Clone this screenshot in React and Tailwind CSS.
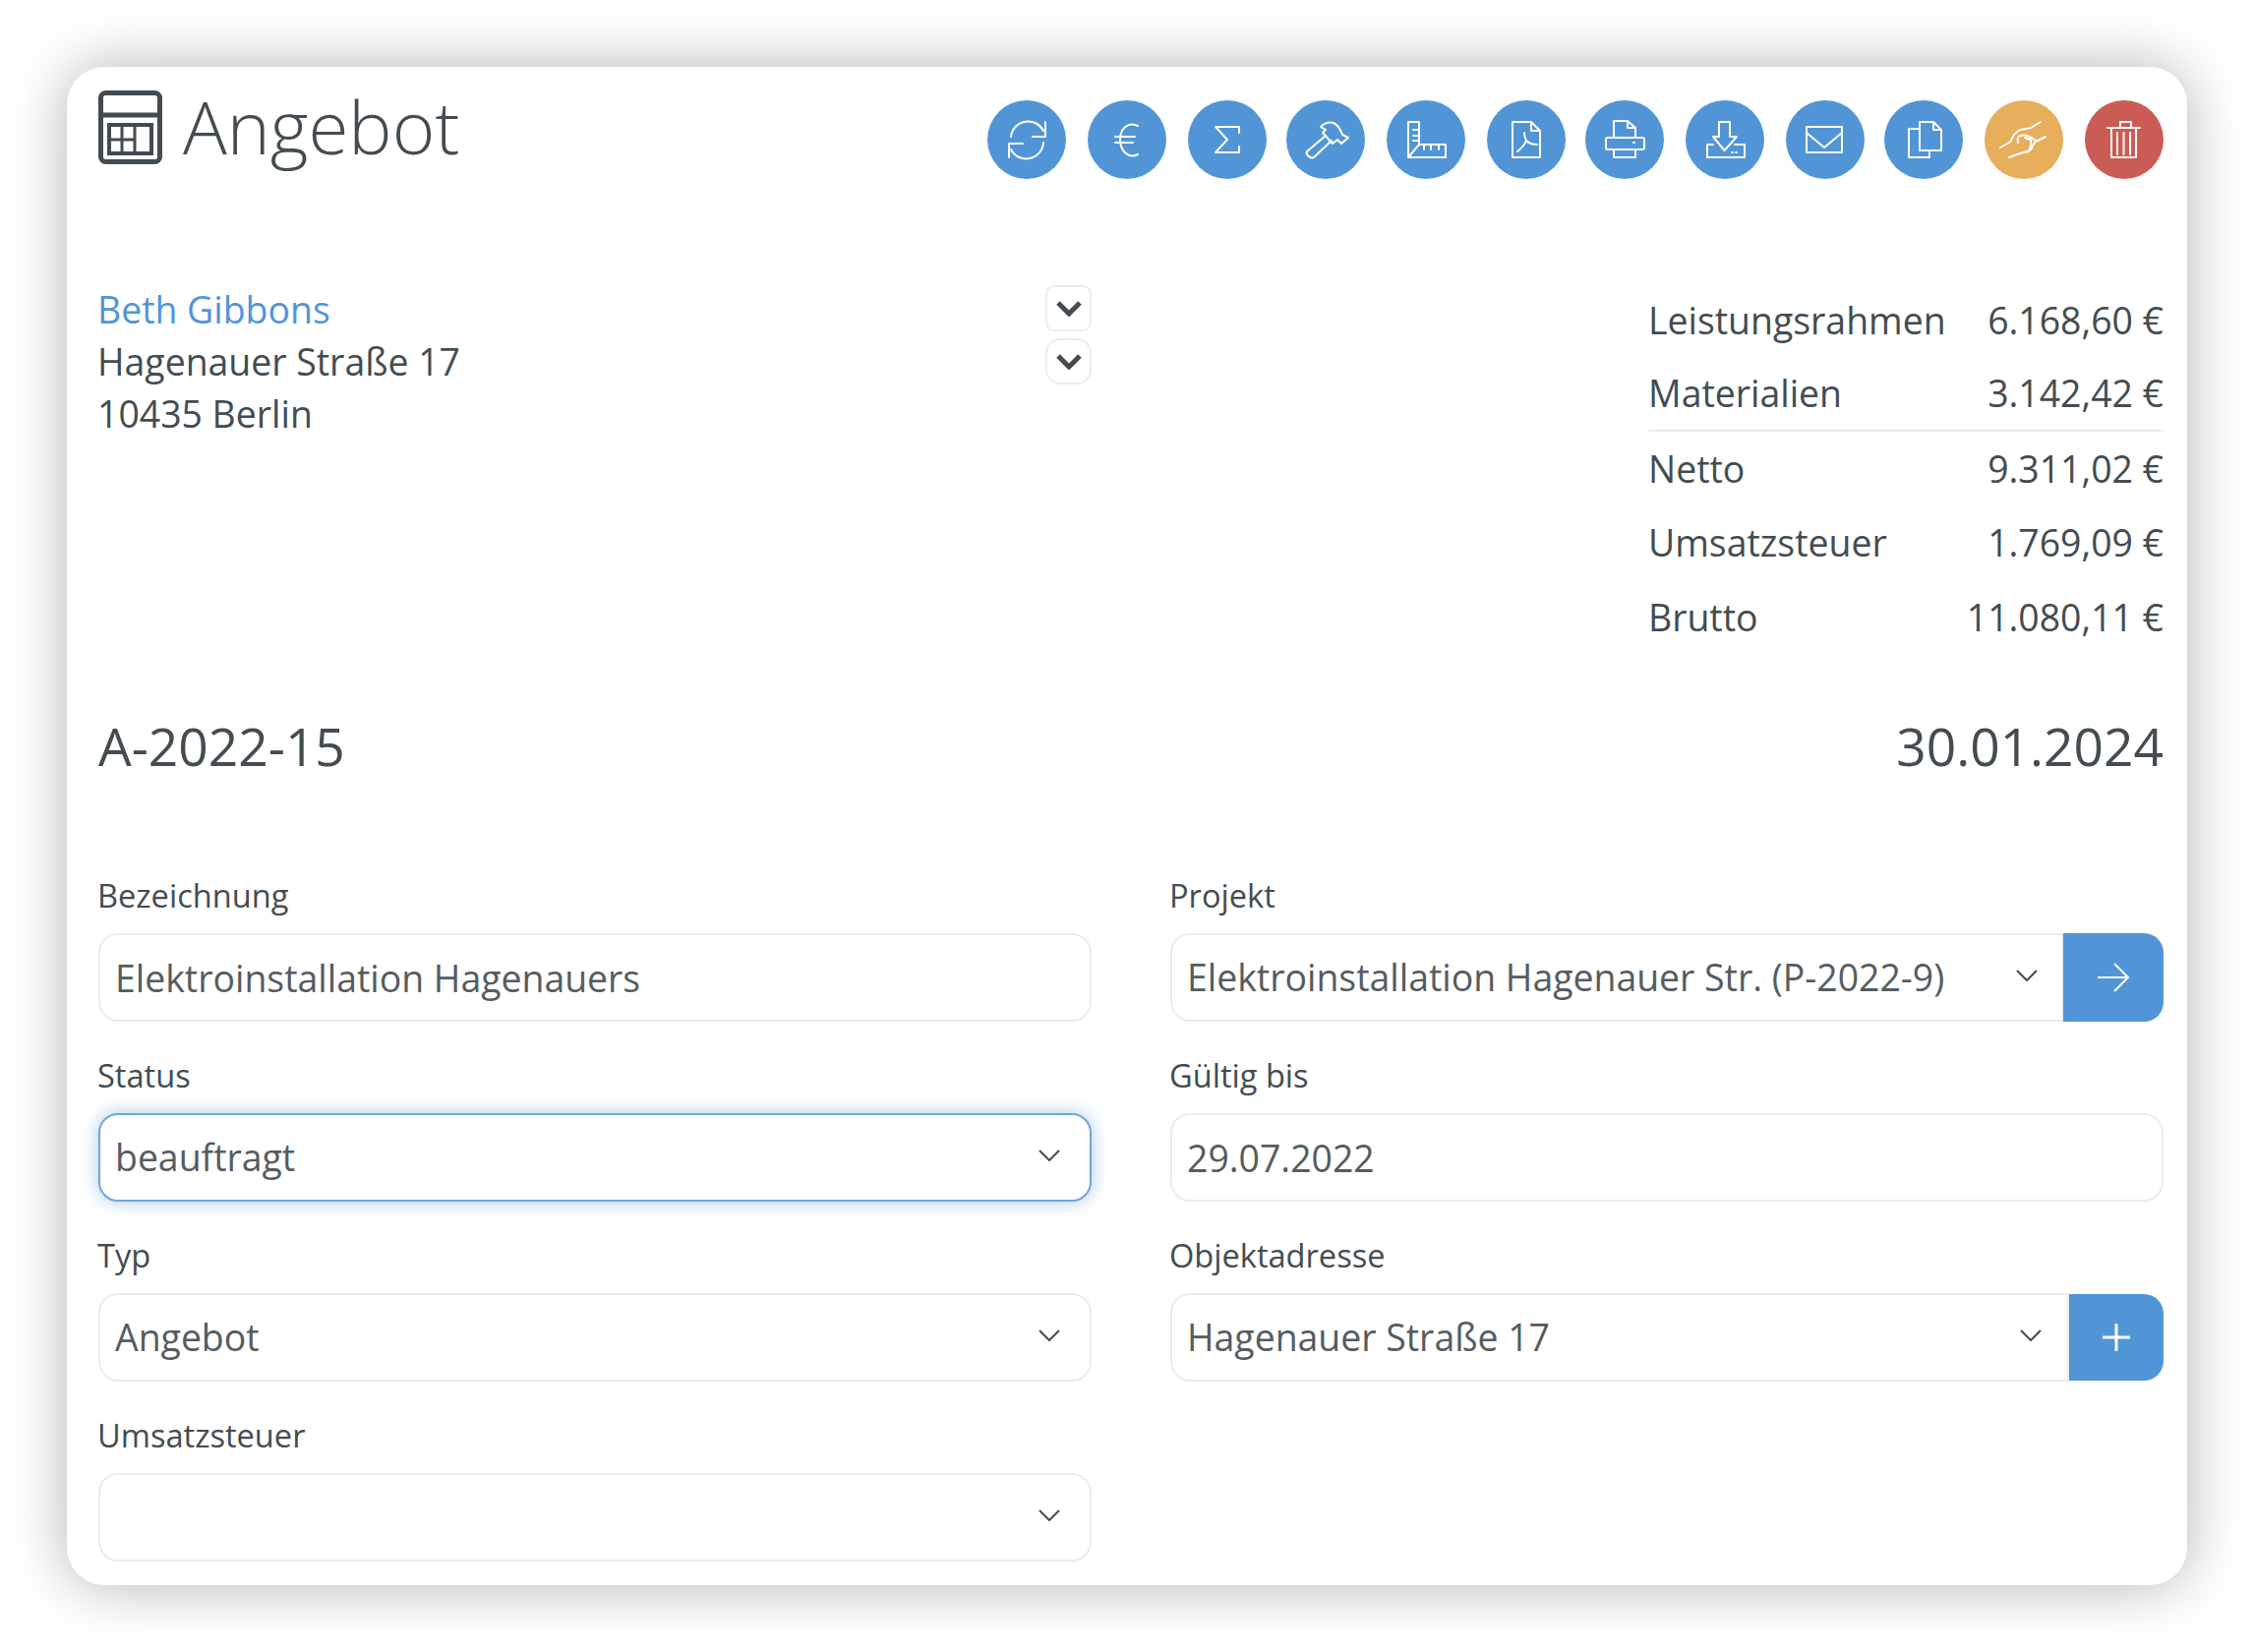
const S = ({ children }) => (
  <svg viewBox="0 0 80 80" className="w-[80px] h-[80px]" fill="none" stroke="white" strokeWidth="2" strokeLinejoin="round" strokeLinecap="round">
    {children}
  </svg>
);

const icons = [
  <S key="a"><path d="M24 37A17.500 17.500 0 0 1 57 31" /><path d="M57 43A17.500 17.500 0 0 1 24 50" /><path d="M59 22v15H46" /><path d="M22 58V44h14" /></S>,
  <S key="b"><path d="M51 26C41 21 33 29 33 40s8 20 18 15" /><path d="M28 37h20M28 43h18" /></S>,
  <S key="c"><path d="M52 33v-6H28l12 13-12 13h24v-6" /></S>,
  <S key="d"><path d="M35 27c4-4 9-5 13-4 4 2 7 6 9 12l6 3-7 6-4-4-5 4-10-11 3-3z" /><path d="M40 36 21 52c-2 3 4 8 7 6l18-17" /></S>,
  <S key="e"><path d="M22 22h11v23h27v13H22z" /><path d="M22 58 33 45" /><path d="M27 30h6M27 36h6M27 41h6M38 45v5M45 45v5M53 45v5" /></S>,
  <S key="f"><path d="M26 22h19l9 9v27H26z" /><path d="M45 22v9h9" /><path d="M38 33c0 4 1 6 2 8 3 3 7 4 11 4M40 41c-2 5-5 8-9 11" /></S>,
  <S key="g"><path d="M29 38V21h14l8 7v10" /><path d="M43 21v7h8" /><rect x="21" y="38" width="39" height="12" rx="2" /><path d="M29 50v8h22v-8" /><path d="M49 43h1" /></S>,
  <S key="h"><path d="M34 22h11v15h7L39.500 51 28 37h6z" /><path d="M28 45h-6v13h38V45H50" /><path d="M47 53h1M51 53h1" /></S>,
  <S key="i"><path d="M21 27h36v26H21z" /><path d="M21 33l18 15 18-15" /></S>,
  <S key="j"><path d="M36 22h14l8 8v21H36z" /><path d="M50 22v8h8" /><path d="M36 29H25v29h21v-7" /></S>,
  <S key="k"><path d="M16 48l9-5c3-2 3-6 5-8 3-3 5-5 7-5 4-1 7-1 10-2l10-6" /><path d="M62 37l-10 5c-3 2-3 6-5 8-2 2-5 3-8 3l-14 5" /><path d="M34 43c-1-4 0-7 3-7 5-2 10 1 15 5" /><path d="M41 38l6 2c1 3 0 6-1 9" /></S>,
  <S key="l"><path d="M23 28h33M36 28v-6h11v6M27 28v30h25V28" /><path d="M33 33v22M39.500 33v22M46 33v22" /></S>,
];

const buttonClasses = [
  "bg-[#5195d7]", "bg-[#5195d7]", "bg-[#5195d7]", "bg-[#5195d7] -ml-[2px]", "bg-[#5195d7]", "bg-[#5195d7]",
  "bg-[#5195d7] -ml-[2px]", "bg-[#5195d7]", "bg-[#5195d7]", "bg-[#5195d7] -ml-[2px]", "bg-[#e7ae5b]", "bg-[#cb5c55]",
];

const Chevron = ({ className }) => (
  <svg viewBox="0 0 22 12" className={className} fill="none" stroke="#444b50" strokeWidth="2">
    <path d="M1 1l10 10L21 1" />
  </svg>
);

const Field = ({ label, children }) => (
  <div className="flex flex-col">
    <label className="h-[58px] -ml-[1px] leading-[39px] text-[32.600px]">{label}</label>
    {children}
  </div>
);

const Select = ({ value, focus, className = "rounded-[20px]", arrow = "right-[32px]" }) => (
  <div className={`relative w-full min-w-0 h-[90px] ${className}`}>
    <select
      defaultValue={value}
      className={`w-full h-full appearance-none bg-white pl-[15px] text-[37.400px] text-[#555c60] outline-none ${className} ${
        focus ? "border-2 border-[#6fa5de] shadow-[0_0_18px_rgba(81,149,215,0.5)]" : "border-2 border-[#ececec]"
      }`}
    >
      <option value={value}>{value}</option>
    </select>
    <Chevron className={`absolute ${arrow} top-[37px] w-[22px] h-[12px] pointer-events-none`} />
  </div>
);

const Input = ({ value }) => (
  <input
    readOnly
    value={value}
    className="w-full h-[90px] rounded-[20px] border-2 border-[#ececec] bg-white pl-[15px] text-[37.400px] text-[#555c60] outline-none"
  />
);

const Row = ({ label, value, className = "" }) => (
  <div className={`flex justify-between items-center h-[75.500px] ${className}`}>
    <span>{label}</span>
    <span>{value}</span>
  </div>
);

export default function App() {
  return (
    <div className="w-[2292px] h-[1680px] bg-white pt-[68px] pl-[68px] font-['Open_Sans',sans-serif] text-[#434c50]">
      <div className="w-[2156px] h-[1544px] bg-white rounded-[38px] shadow-[0_0_60px_rgba(0,0,0,0.3)] pl-[32px] pr-[24px] pt-[24px]">
        <header className="flex justify-between h-[120px]">
          <div className="flex items-start">
            <svg viewBox="0 0 65 75" className="w-[65px] h-[75px]" fill="none" stroke="#434b52" strokeWidth="5">
              <rect x="2.500" y="2.500" width="60" height="70" rx="5" />
              <path d="M2.500 25h60" />
              <rect x="11" y="35" width="43" height="29" strokeWidth="4" />
              <path d="M24 35v29M37 35v29M11 50h26" strokeWidth="3" />
            </svg>
            <h1 className="ml-[21px] -mt-[2px] text-[74.500px] leading-[76px] font-light">Angebot</h1>
          </div>
          <div className="flex gap-[22px] pt-[10px]">
            {icons.map((icon, i) => (
              <button key={i} className={`w-[80px] h-[80px] rounded-full flex items-center justify-center ${buttonClasses[i]}`}>
                {icon}
              </button>
            ))}
          </div>
        </header>

        <section className="flex justify-between pt-[74px] h-[510px] text-[37.400px]">
          <div className="w-[1010px] flex justify-between">
            <div className="leading-[53px] pt-[2px] -ml-[1px]">
              <div className="text-[#5195d7]">Beth Gibbons</div>
              <div>Hagenauer Straße 17</div>
              <div>10435 Berlin</div>
            </div>
            <div className="flex flex-col gap-[7px] pt-[4px]">
              <button className="w-[47px] h-[47px] rounded-[9px] border-2 border-[#ececec] flex items-center justify-center">
                <svg viewBox="0 0 26 16" className="w-[26px] h-[16px]" fill="none" stroke="#444b50" strokeWidth="5"><path d="M2 2l11 11L24 2" /></svg>
              </button>
              <button className="w-[47px] h-[47px] rounded-[15px] border-2 border-[#ececec] flex items-center justify-center">
                <svg viewBox="0 0 26 16" className="w-[26px] h-[16px]" fill="none" stroke="#444b50" strokeWidth="5"><path d="M2 2l11 11L24 2" /></svg>
              </button>
            </div>
          </div>
          <div className="w-[524px] pt-[2px]">
            <Row label="Leistungsrahmen" value="6.168,60 €" />
            <Row label="Materialien" value="3.142,42 €" className="border-b-2 border-[#ececec]" />
            <Row label="Netto" value="9.311,02 €" />
            <Row label="Umsatzsteuer" value="1.769,09 €" />
            <Row label="Brutto" value="11.080,11 €" />
          </div>
        </section>

        <section className="flex justify-between text-[53.300px] leading-[74px] h-[169px]">
          <div>A-2022-15</div>
          <div>30.01.2024</div>
        </section>

        <section className="grid grid-cols-2 gap-x-[80px] gap-y-[35px]">
          <Field label="Bezeichnung"><Input value="Elektroinstallation Hagenauers" /></Field>
          <Field label="Projekt">
            <div className="flex">
              <Select value="Elektroinstallation Hagenauer Str. (P-2022-9)" className="rounded-l-[20px]" arrow="right-[26px]" />
              <button className="w-[102px] shrink-0 h-[90px] bg-[#5195d7] rounded-r-[20px] flex items-center justify-center">
                <svg viewBox="0 0 34 30" className="w-[34px] h-[30px]" fill="none" stroke="white" strokeWidth="2"><path d="M1 15h31M18 1l14 14-14 14" /></svg>
              </button>
            </div>
          </Field>
          <Field label="Status"><Select value="beauftragt" focus /></Field>
          <Field label="Gültig bis"><Input value="29.07.2022" /></Field>
          <Field label="Typ"><Select value="Angebot" /></Field>
          <Field label="Objektadresse">
            <div className="flex items-center">
              <Select value="Hagenauer Straße 17" className="rounded-l-[20px]" arrow="right-[28px]" />
              <button className="w-[96px] shrink-0 h-[88px] bg-[#5195d7] rounded-r-[20px] flex items-center justify-center">
                <svg viewBox="0 0 30 30" className="w-[30px] h-[30px]" fill="none" stroke="white" strokeWidth="3"><path d="M15 1v28M1 15h28" /></svg>
              </button>
            </div>
          </Field>
          <Field label="Umsatzsteuer"><Select value="" /></Field>
        </section>
      </div>
    </div>
  );
}
